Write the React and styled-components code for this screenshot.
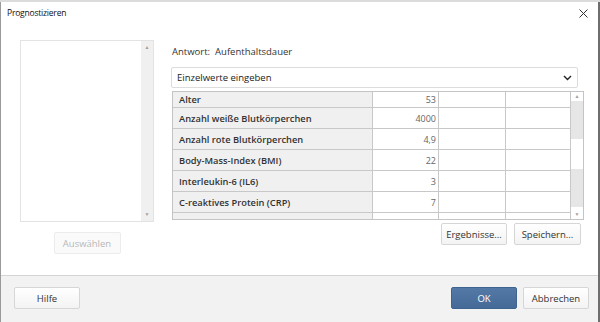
import React from 'react'
import styled, { createGlobalStyle } from 'styled-components'

const GlobalStyle = createGlobalStyle`
  html, body {
    margin: 0;
    padding: 0;
    width: 600px;
    height: 322px;
    overflow: hidden;
    background: #ffffff;
  }
  * { box-sizing: border-box; }
`

const rows = [
  { label: 'Alter', value: '53' },
  { label: 'Anzahl weiße Blutkörperchen', value: '4000' },
  { label: 'Anzahl rote Blutkörperchen', value: '4,9' },
  { label: 'Body-Mass-Index (BMI)', value: '22' },
  { label: 'Interleukin-6 (IL6)', value: '3' },
  { label: 'C-reaktives Protein (CRP)', value: '7' },
  { label: '', value: '' },
]

const App = () => {
  return (
    <>
      <GlobalStyle />
      <Screen>
        <Backdrop />
        <Dialog>
          <TitleBar>
            <Title>Prognostizieren</Title>
            <Close>
              <svg width="9" height="9" viewBox="0 0 9 9">
                <path d="M0.5 0.5 L8.5 8.5 M8.5 0.5 L0.5 8.5" stroke="#333" strokeWidth="1" />
              </svg>
            </Close>
          </TitleBar>
          <Body>
            <LeftColumn>
              <ListBox>
                <ScrollTrack $width={12}>
                  <Arrow>▲</Arrow>
                  <Arrow>▼</Arrow>
                </ScrollTrack>
              </ListBox>
              <Button $disabled $width={67}>Auswählen</Button>
            </LeftColumn>
            <RightColumn>
              <Answer>
                <span>Antwort:</span>
                <span>Aufenthaltsdauer</span>
              </Answer>
              <Select>
                <span>Einzelwerte eingeben</span>
                <svg width="9" height="6" viewBox="0 0 9 6">
                  <path d="M1 1 L4.5 4.5 L8 1" stroke="#222" strokeWidth="1.4" fill="none" />
                </svg>
              </Select>
              <Table>
                <Grid>
                  {rows.map((r, i) => (
                    <Row key={i} $first={i === 0}>
                      <LabelCell>{r.label}</LabelCell>
                      <ValueCell>{r.value}</ValueCell>
                      <ValueCell />
                      <ValueCell />
                    </Row>
                  ))}
                </Grid>
                <TableScroll>
                  <Arrow>▲</Arrow>
                  <Track>
                    <TrackPart $size={38} />
                    <Thumb />
                    <TrackPart $size={38} />
                    <Blank />
                  </Track>
                  <Arrow>▼</Arrow>
                </TableScroll>
              </Table>
              <ActionRow>
                <Button $width={66}>Ergebnisse...</Button>
                <Button $width={67}>Speichern...</Button>
              </ActionRow>
            </RightColumn>
          </Body>
          <Footer>
            <Button $width={66}>Hilfe</Button>
            <Spacer />
            <Button $primary $width={66}>OK</Button>
            <Button $width={66}>Abbrechen</Button>
          </Footer>
        </Dialog>
      </Screen>
    </>
  )
}

const Screen = styled.div`
  width: 600px;
  height: 322px;
  display: flex;
  flex-direction: column;
  font-family: 'Open Sans', 'Noto Sans', sans-serif;
  color: #333;
`

const Backdrop = styled.div`
  height: 2px;
  background: #dcdcdc;
`

const Dialog = styled.div`
  flex: 1;
  display: flex;
  flex-direction: column;
  background: #fff;
  border-left: 1px solid #9a9a9a;
  border-right: 2px solid #6e6e6e;
`

const TitleBar = styled.div`
  height: 28px;
  display: flex;
  align-items: flex-start;
  justify-content: space-between;
  padding: 5px 10px 0 6px;
`

const Title = styled.div`
  font-size: 8.5px;
  color: #111;
  letter-spacing: -0.2px;
`

const Close = styled.div`
  padding-top: 2px;
  display: flex;
`

const Body = styled.div`
  flex: 1;
  display: flex;
  gap: 18px;
  padding: 10px 0 0 19px;
`

const LeftColumn = styled.div`
  width: 134px;
  display: flex;
  flex-direction: column;
  align-items: center;
  gap: 10px;
`

const ListBox = styled.div`
  width: 134px;
  height: 182px;
  border: 1px solid #e3e3e3;
  display: flex;
  justify-content: flex-end;
`

const ScrollTrack = styled.div`
  width: ${p => p.$width}px;
  background: #f0f0f0;
  display: flex;
  flex-direction: column;
  justify-content: space-between;
  padding: 2px 0;
`

const Arrow = styled.div`
  font-size: 5px;
  color: #a0a0a0;
  text-align: center;
  line-height: 9px;
  height: 9px;
  flex-shrink: 0;
`

const RightColumn = styled.div`
  width: 412px;
  display: flex;
  flex-direction: column;
`

const Answer = styled.div`
  display: flex;
  gap: 5px;
  font-size: 9.5px;
  color: #333;
  padding-top: 5px;
  height: 27px;
`

const Select = styled.div`
  width: 407px;
  height: 21px;
  margin-left: -1px;
  border: 1px solid #dcdcdc;
  border-radius: 2px;
  display: flex;
  align-items: center;
  justify-content: space-between;
  padding: 0 5px 0 5px;
  font-size: 9.5px;
  color: #222;
`

const Table = styled.div`
  margin-top: 3px;
  height: 129px;
  border: 1px solid #c4c4c4;
  display: flex;
  overflow: hidden;
`

const Grid = styled.div`
  flex: 1;
  display: flex;
  flex-direction: column;
`

const Row = styled.div`
  display: grid;
  grid-template-columns: 200px 66px 67px 1fr;
  height: ${p => (p.$first ? 16 : 21)}px;
  flex-shrink: 0;
  border-bottom: 1px solid #c8c8c8;
`

const LabelCell = styled.div`
  background: #f0f0f0;
  border-right: 1px solid #c8c8c8;
  font-size: 9.3px;
  font-weight: 600;
  color: #333;
  display: flex;
  align-items: center;
  padding-left: 6px;
  white-space: nowrap;
`

const ValueCell = styled.div`
  border-right: 1px solid #c8c8c8;
  font-size: 9px;
  color: #666;
  display: flex;
  align-items: center;
  justify-content: flex-end;
  padding-right: 2px;
`

const TableScroll = styled.div`
  width: 12px;
  display: flex;
  flex-direction: column;
  background: #fff;
`

const Track = styled.div`
  flex: 1;
  display: flex;
  flex-direction: column;
`

const TrackPart = styled.div`
  height: ${p => p.$size}px;
  background: #e6e6e6;
`

const Thumb = styled.div`
  height: 30px;
  background: #fff;
`

const Blank = styled.div`
  flex: 1;
`

const ActionRow = styled.div`
  display: flex;
  justify-content: flex-end;
  gap: 7px;
  padding: 3px 3px 0 0;
`

const Button = styled.div`
  width: ${p => p.$width}px;
  height: 22px;
  border-radius: 2px;
  display: flex;
  align-items: center;
  justify-content: center;
  font-size: 9.5px;
  border: 1px solid ${p => (p.$primary ? '#3f6390' : p.$disabled ? '#ececec' : '#d6d6d6')};
  background: ${p =>
    p.$primary
      ? 'linear-gradient(#5579a6, #456a97)'
      : p.$disabled
      ? '#fafafa'
      : 'linear-gradient(#ffffff, #f3f3f3)'};
  color: ${p => (p.$primary ? '#fff' : p.$disabled ? '#b8b8b8' : '#333')};
`

const Spacer = styled.div`
  flex: 1;
`

const Footer = styled.div`
  height: 47px;
  border-top: 1px solid #d4d4d4;
  background: #f2f2f2;
  display: flex;
  align-items: flex-start;
  gap: 6px;
  padding: 11px 9px 0 13px;
`

export default App
